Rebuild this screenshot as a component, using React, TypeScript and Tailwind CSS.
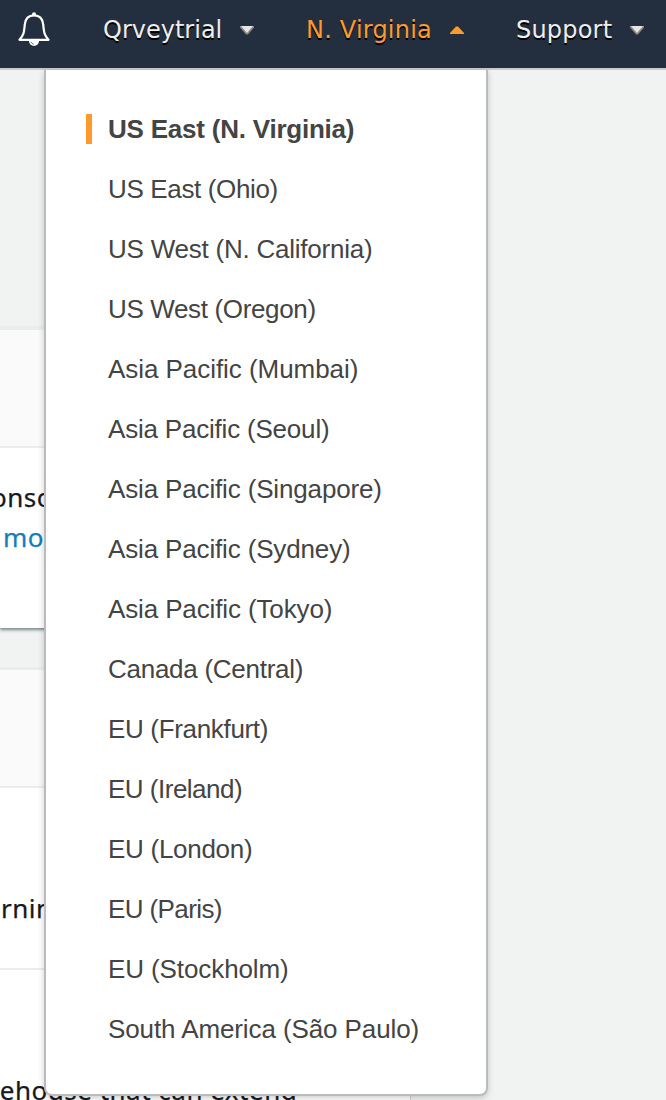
import React from "react";

const regions: { name: string; tracking: string }[] = [
  { name: "US East (N. Virginia)", tracking: "tracking-[-0.22px]" },
  { name: "US East (Ohio)", tracking: "tracking-[-0.35px]" },
  { name: "US West (N. California)", tracking: "tracking-[-0.23px]" },
  { name: "US West (Oregon)", tracking: "tracking-[-0.35px]" },
  { name: "Asia Pacific (Mumbai)", tracking: "tracking-[-0.05px]" },
  { name: "Asia Pacific (Seoul)", tracking: "tracking-[-0.2px]" },
  { name: "Asia Pacific (Singapore)", tracking: "tracking-[-0.15px]" },
  { name: "Asia Pacific (Sydney)", tracking: "tracking-[-0.15px]" },
  { name: "Asia Pacific (Tokyo)", tracking: "tracking-[-0.13px]" },
  { name: "Canada (Central)", tracking: "tracking-[-0.27px]" },
  { name: "EU (Frankfurt)", tracking: "tracking-[-0.33px]" },
  { name: "EU (Ireland)", tracking: "tracking-[-0.5px]" },
  { name: "EU (London)", tracking: "tracking-[-0.28px]" },
  { name: "EU (Paris)", tracking: "tracking-[-0.6px]" },
  { name: "EU (Stockholm)", tracking: "tracking-[-0.1px]" },
  { name: "South America (São Paulo)", tracking: "tracking-[-0.1px]" },
];

function Bell() {
  return (
    <svg className="ml-[18px] mt-3 h-[35px] w-8 shrink-0" viewBox="0 0 32 35" fill="none">
      <path
        d="M1.5 27.8C6.5 22.5 6 19 6.8 12.5C7.4 6.5 10.5 3.4 16 3.4S24.6 6.5 25.2 12.5C26 19 25.5 22.5 30.5 27.8Z"
        stroke="#fff"
        strokeWidth="2.2"
        strokeLinejoin="round"
      />
      <circle cx="16" cy="2.3" r="2" fill="#fff" />
      <path d="M11 29a5 5 0 0 0 10 0Z" fill="#fff" />
      <path d="M12.9 30q1 1.8 2.7 2.2" stroke="#232f3e" strokeWidth=".7" />
    </svg>
  );
}

function Caret({ up = false }: { up?: boolean }) {
  return (
    <svg className="mt-[26px] h-[9px] w-[14px] shrink-0" viewBox="0 0 14 9">
      {up ? (
        <path d="M0 8V7L6 0.5H8L14 7V8Z" fill="#ff9a2b" />
      ) : (
        <>
          <path d="M0 0H14V1.5L8 8.5H6L0 1.5Z" fill="#8b8884" />
          <path d="M1 0H13L7 7Z" fill="#e6e6e6" />
        </>
      )}
    </svg>
  );
}

function NavLabel({ text, className }: { text: string; className: string }) {
  return (
    <span
      className={`block shrink-0 whitespace-nowrap font-['DejaVu_Sans',sans-serif] text-2xl leading-[60px] [text-shadow:0_2px_0_#000] ${className}`}
    >
      {text}
    </span>
  );
}

function Header() {
  return (
    <header className="flex h-[70px] items-start border-b-2 border-[#c9cccc] bg-[#232f3e]">
      <Bell />
      <NavLabel text="Qrveytrial" className="ml-[53px] w-[137px] text-[#eee]" />
      <Caret />
      <NavLabel text="N. Virginia" className="ml-[52px] w-[144px] tracking-[0.2px] text-[#ff9a2b]" />
      <Caret up />
      <NavLabel text="Support" className="ml-[52px] w-[114px] tracking-[0.2px] text-[#eee]" />
      <Caret />
    </header>
  );
}

function Dropdown() {
  return (
    <nav className="absolute left-11 top-[70px] h-[1026px] w-[444px] rounded-b-lg border-2 border-t-0 border-[#bbb] bg-white pt-[29px] shadow-[0_2px_6px_rgba(0,0,0,0.2)]">
      <ul>
        {regions.map((r, i) => (
          <li key={r.name} className="flex h-[60px] items-center pl-10">
            <span className={`h-[30px] w-1.5 ${i === 0 ? "bg-[#ff992c]" : ""}`} />
            <span
              className={`ml-4 whitespace-nowrap font-['Liberation_Sans',sans-serif] text-[26px] leading-[30px] text-[#444] ${r.tracking} ${i === 0 ? "font-bold" : ""}`}
            >
              {r.name}
            </span>
          </li>
        ))}
      </ul>
    </nav>
  );
}

function Content() {
  return (
    <main className="w-[411px] whitespace-nowrap pt-[257px] font-['Noto_Sans',sans-serif] text-[26px] leading-10 tracking-[0.5px] text-[#16191f] [-webkit-text-stroke:0.25px_currentColor]">
      <section className="h-[301px] border-r border-t-[3px] border-[#eaeded] bg-white shadow-[0_2px_3px_rgba(0,28,36,0.5)]">
        <div className="h-[118px] border-b-2 border-[#eaeded] bg-[#fafafa]" />
        <div className="pt-[29px]">
          <p className="-ml-[9px]">onsole</p>
          <p className="ml-[3px] text-[#147eba]">more</p>
        </div>
      </section>
      <section className="mt-[39px] h-[433px] border-r border-t-[3px] border-r-[#cfd3d3] border-t-[#eaeded] bg-white">
        <div className="h-[118px] border-b-2 border-[#eaeded] bg-[#fafafa]" />
        <div className="h-[182px] border-b-2 border-[#eaeded] pt-[100px]">
          <p className="ml-px">rning</p>
        </div>
        <p className="-ml-[11px] pt-[100px]">rehouse that can extend</p>
      </section>
    </main>
  );
}

export default function App() {
  return (
    <div className="relative h-[1100px] w-[666px] overflow-hidden bg-[#f1f3f3]">
      <Header />
      <Content />
      <Dropdown />
    </div>
  );
}
